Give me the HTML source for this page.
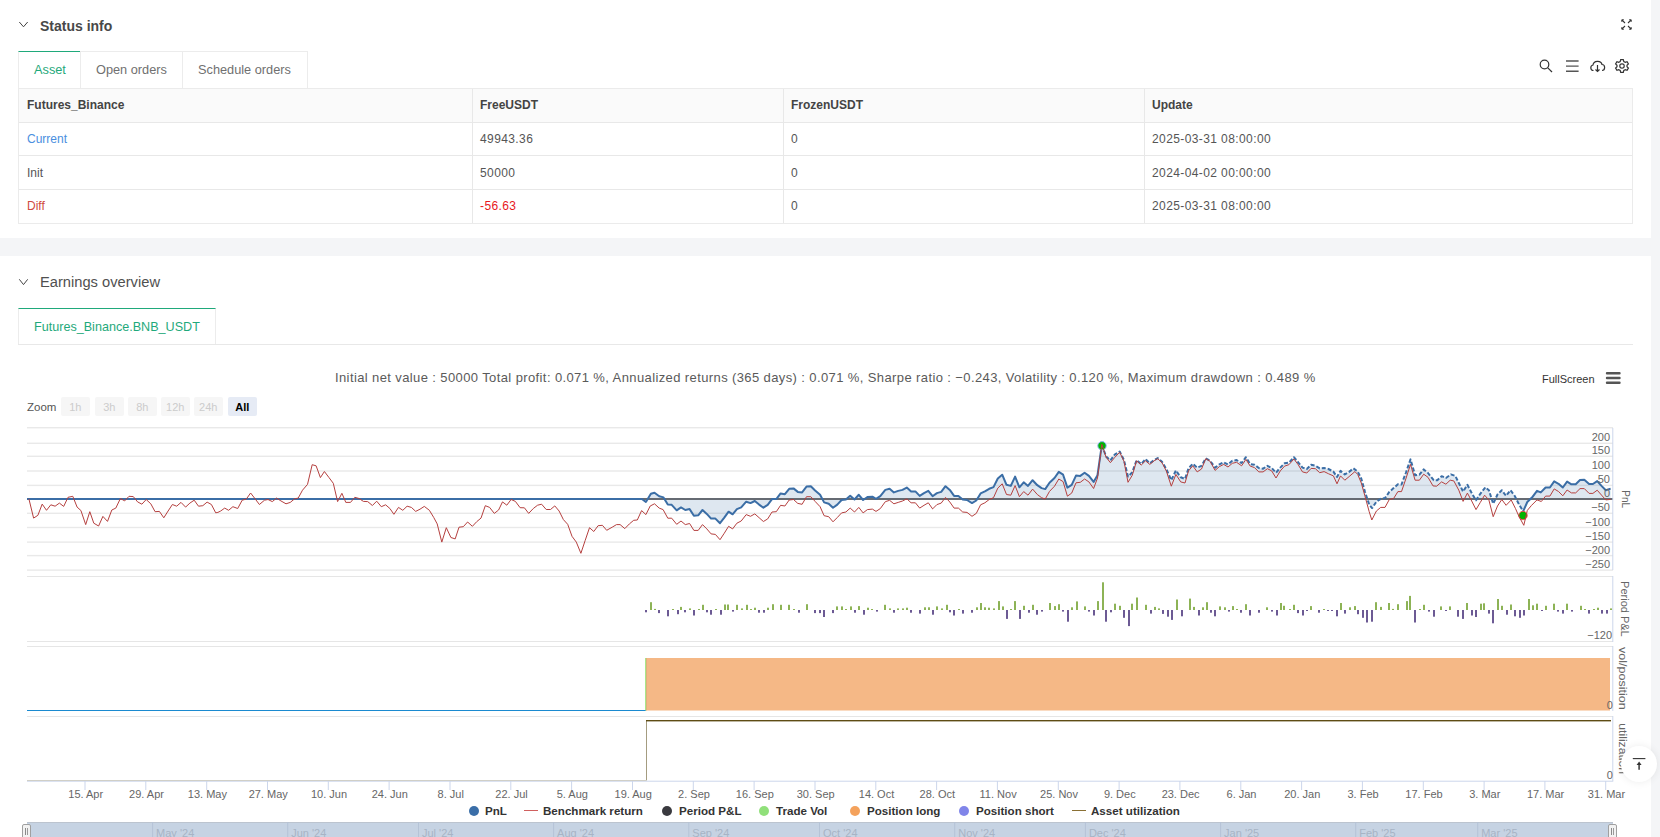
<!DOCTYPE html>
<html><head><meta charset="utf-8">
<style>
*{box-sizing:border-box;margin:0;padding:0}
html,body{width:1660px;height:837px;overflow:hidden;background:#f4f5f7;font-family:"Liberation Sans",sans-serif;color:#333}
.abs{position:absolute}
.panel{position:absolute;left:0;width:1651px;background:#fff}
.t{position:absolute;white-space:nowrap;line-height:1}
svg text{font-family:"Liberation Sans",sans-serif}
.tbl{position:absolute;left:18px;top:88px;width:1615px;height:136px;border:1px solid #ebebeb}
.row{position:absolute;left:0;width:1613px;border-bottom:1px solid #e8e8e8}
.col{position:absolute;top:0;bottom:0;width:1px;background:#e8e8e8}
.cell{position:absolute;font-size:12px;color:#555;white-space:nowrap;line-height:1}
.hd{font-weight:bold;color:#444}
.tab{position:absolute;border:1px solid #ececec;border-bottom:none;font-size:12.75px;color:#666;line-height:1}
.zb{position:absolute;top:397px;width:28.5px;height:19px;background:#f6f6f6;border-radius:2px;font-size:11px;color:#ccc;text-align:center;line-height:20px}
.lg{position:absolute;top:804.5px;font-size:11.6px;font-weight:bold;color:#333;white-space:nowrap;line-height:1}
.dot{position:absolute;top:805.5px;width:10px;height:10px;border-radius:50%}
</style></head><body>
<!-- Panel 1 -->
<div class="panel" style="top:0;height:238px">
  <svg class="abs" style="left:18px;top:20px" width="11" height="9" viewBox="0 0 11 9"><path d="M1.3 2 L5.5 6.8 L9.7 2" fill="none" stroke="#444" stroke-width="1"/></svg>
  <div class="t" style="left:40px;top:19px;font-size:14px;font-weight:bold;color:#484848">Status info</div>
  <svg class="abs" style="left:1620px;top:18px" width="13" height="13" viewBox="0 0 13 13">
    <g stroke="#333" stroke-width="1.1" fill="none"><path d="M1.8 1.8 L5 5 M1.8 1.8 L1.8 3.8 M1.8 1.8 L3.8 1.8"/><path d="M11.2 1.8 L8 5 M11.2 1.8 L9.2 1.8 M11.2 1.8 L11.2 3.8"/><path d="M1.8 11.2 L5 8 M1.8 11.2 L1.8 9.2 M1.8 11.2 L3.8 11.2"/><path d="M11.2 11.2 L8 8 M11.2 11.2 L11.2 9.2 M11.2 11.2 L9.2 11.2"/></g>
  </svg>
  <!-- tabs -->
  <div class="tab" style="left:18px;top:51px;width:63px;height:37px;border-top:1px solid #1fa97b;color:#1fa97b"><span class="t" style="left:15px;top:12px">Asset</span></div>
  <div class="tab" style="left:80px;top:51px;width:103px;height:37px;color:#707070"><span class="t" style="left:15px;top:12px">Open orders</span></div>
  <div class="tab" style="left:182px;top:51px;width:126px;height:37px;color:#707070"><span class="t" style="left:15px;top:12px">Schedule orders</span></div>
  <!-- toolbar icons -->
  <svg class="abs" style="left:1536px;top:56px" width="100" height="20" viewBox="0 0 100 20">
    <g fill="none" stroke="#333" stroke-width="1.2">
      <circle cx="8.5" cy="8.5" r="4.3"/><path d="M11.8 11.8 L16 16"/>
      <path d="M30 5 L42.6 5 M30 10.1 L42.6 10.1 M30 15.2 L42.6 15.2" stroke-width="1.4" stroke="#555"/>
      <path d="M57.5 14.5 C54 14.5 54 9.5 57 9 C57.5 4.5 65 4 66 8.5 C69.5 8.5 69.5 14.5 66 14.5"/><path d="M61.5 9 L61.5 15.5 M59.5 13.5 L61.5 15.5 L63.5 13.5"/>
    </g>
    <g transform="translate(86 10)" fill="none" stroke="#333" stroke-width="1.2">
      <path d="M-1.3 -6.3 L1.3 -6.3 L1.8 -4.4 L3.3 -3.6 L5.1 -4.3 L6.4 -2.1 L5 -0.8 L5 0.8 L6.4 2.1 L5.1 4.3 L3.3 3.6 L1.8 4.4 L1.3 6.3 L-1.3 6.3 L-1.8 4.4 L-3.3 3.6 L-5.1 4.3 L-6.4 2.1 L-5 0.8 L-5 -0.8 L-6.4 -2.1 L-5.1 -4.3 L-3.3 -3.6 L-1.8 -4.4 Z"/>
      <circle cx="0" cy="0" r="2.2"/>
    </g>
  </svg>
  <!-- table -->
  <div class="tbl">
    <div class="row" style="top:0;height:34px;background:#fafafa"></div>
    <div class="row" style="top:34px;height:33px"></div>
    <div class="row" style="top:67px;height:34px"></div>
    <div class="col" style="left:453px"></div>
    <div class="col" style="left:764px"></div>
    <div class="col" style="left:1125px"></div>
    <div class="cell hd" style="left:8px;top:10px">Futures_Binance</div>
    <div class="cell hd" style="left:461px;top:10px">FreeUSDT</div>
    <div class="cell hd" style="left:772px;top:10px">FrozenUSDT</div>
    <div class="cell hd" style="left:1133px;top:10px">Update</div>
    <div class="cell" style="left:8px;top:43.5px;color:#4a8fe0">Current</div>
    <div class="cell" style="left:461px;top:43.5px;letter-spacing:0.4px">49943.36</div>
    <div class="cell" style="left:772px;top:43.5px;letter-spacing:0.4px">0</div>
    <div class="cell" style="left:1133px;top:43.5px;letter-spacing:0.4px">2025-03-31 08:00:00</div>
    <div class="cell" style="left:8px;top:77.5px">Init</div>
    <div class="cell" style="left:461px;top:77.5px;letter-spacing:0.4px">50000</div>
    <div class="cell" style="left:772px;top:77.5px;letter-spacing:0.4px">0</div>
    <div class="cell" style="left:1133px;top:77.5px;letter-spacing:0.4px">2024-04-02 00:00:00</div>
    <div class="cell" style="left:8px;top:110.5px;color:#d04a40">Diff</div>
    <div class="cell" style="left:461px;top:110.5px;color:#e8171d;letter-spacing:0.4px">-56.63</div>
    <div class="cell" style="left:772px;top:110.5px;letter-spacing:0.4px">0</div>
    <div class="cell" style="left:1133px;top:110.5px;letter-spacing:0.4px">2025-03-31 08:00:00</div>
  </div>
</div>
<!-- Panel 2 -->
<div class="panel" style="top:256px;height:581px">
  <svg class="abs" style="left:18px;top:21px" width="11" height="9" viewBox="0 0 11 9"><path d="M1.3 2.3 L5.5 7.6 L9.7 2.3" fill="none" stroke="#444" stroke-width="1"/></svg>
  <div class="t" style="left:40px;top:19px;font-size:14.7px;color:#505050">Earnings overview</div>
  <div class="abs" style="left:18px;top:88px;width:1615px;height:1px;background:#e8e8e8"></div>
  <div class="tab" style="left:18px;top:52px;width:198px;height:36px;border-top:1px solid #1fa97b;color:#1fa97b;font-size:12.6px"><span class="t" style="left:15px;top:11.5px">Futures_Binance.BNB_USDT</span></div>
</div>
<div class="t" style="left:335px;top:370.6px;font-size:13px;letter-spacing:0.39px;color:#5a5a5a">Initial net value : 50000 Total profit: 0.071 %, Annualized returns (365 days) : 0.071 %, Sharpe ratio : −0.243, Volatility : 0.120 %, Maximum drawdown : 0.489 %</div>
<div class="t" style="left:1542px;top:373.5px;font-size:11px;color:#333">FullScreen</div>
<svg class="abs" style="left:1605px;top:371px" width="16" height="14" viewBox="0 0 16 14"><g stroke="#555" stroke-width="2.4" stroke-linecap="round"><path d="M2 2.3 L14.5 2.3 M2 7 L14.5 7 M2 11.7 L14.5 11.7"/></g></svg>
<div class="t" style="left:27px;top:401.8px;font-size:11.5px;color:#555">Zoom</div>
<div class="zb" style="left:61px">1h</div>
<div class="zb" style="left:95px">3h</div>
<div class="zb" style="left:128px">8h</div>
<div class="zb" style="left:161px">12h</div>
<div class="zb" style="left:194px">24h</div>
<div class="zb" style="left:228px;background:#e6ebf5;color:#000;font-weight:bold">All</div>
<svg width="1660" height="837" viewBox="0 0 1660 837" style="position:absolute;left:0;top:0">
<rect x="27" y="427.0" width="1586" height="1.4" fill="#e9e9e9"/>
<rect x="27" y="442.6" width="1586" height="1.4" fill="#e9e9e9"/>
<rect x="27" y="455.6" width="1586" height="1.4" fill="#e9e9e9"/>
<rect x="27" y="470.3" width="1586" height="1.4" fill="#e9e9e9"/>
<rect x="27" y="484.7" width="1586" height="1.4" fill="#e9e9e9"/>
<rect x="27" y="512.6" width="1586" height="1.4" fill="#e9e9e9"/>
<rect x="27" y="526.8" width="1586" height="1.4" fill="#e9e9e9"/>
<rect x="27" y="541.4" width="1586" height="1.4" fill="#e9e9e9"/>
<rect x="27" y="554.9" width="1586" height="1.4" fill="#e9e9e9"/>
<rect x="27" y="569.4" width="1586" height="1.4" fill="#e9e9e9"/>
<rect x="27" y="576" width="1586" height="1" fill="#e6e6e6"/>
<rect x="27" y="641" width="1586" height="1" fill="#e6e6e6"/>
<rect x="27" y="646" width="1586" height="1" fill="#e6e6e6"/>
<rect x="27" y="716" width="1586" height="1" fill="#e6e6e6"/>
<path d="M27.0 499.0 L641.6 499.0 L641.6 498.8 L645.9 502.0 L650.9 493.8 L654.5 492.7 L659.2 496.2 L663.5 497.4 L667.8 504.6 L671.7 504.8 L676.7 510.3 L681.0 507.4 L685.3 510.0 L689.6 509.1 L693.9 515.7 L698.2 515.3 L702.5 510.0 L706.8 513.9 L711.1 518.6 L715.4 518.6 L720.0 523.2 L724.3 517.7 L728.6 511.7 L732.6 514.3 L736.9 509.1 L741.2 507.4 L746.2 501.7 L750.5 503.1 L754.8 501.0 L759.1 504.6 L763.4 507.7 L767.7 504.8 L772.0 499.1 L776.3 499.1 L780.6 493.4 L784.9 494.2 L789.2 488.8 L793.5 488.4 L797.8 491.9 L802.1 492.4 L806.5 486.6 L810.8 486.3 L815.1 490.5 L820.1 494.8 L824.1 502.4 L828.7 503.8 L833.0 507.8 L837.3 504.6 L841.6 500.0 L845.9 499.5 L850.2 495.7 L854.5 499.5 L858.8 494.8 L863.1 500.0 L867.4 497.1 L872.4 496.7 L876.0 498.8 L880.3 496.2 L885.3 489.9 L889.6 488.8 L893.9 492.4 L898.2 490.9 L902.5 489.9 L906.8 487.6 L911.1 491.4 L915.4 491.4 L919.7 495.9 L924.0 493.1 L928.3 490.9 L932.6 496.2 L936.9 493.1 L941.2 491.9 L945.5 486.2 L949.8 489.9 L954.1 495.9 L958.4 495.9 L962.7 499.5 L967.0 500.0 L972.0 503.1 L976.3 500.5 L980.6 493.4 L984.9 491.4 L989.2 488.8 L993.5 487.1 L997.8 478.5 L1002.2 474.7 L1006.5 484.8 L1010.8 485.9 L1015.1 476.6 L1019.4 487.3 L1023.7 482.3 L1028.0 485.9 L1032.6 480.2 L1037.3 485.2 L1041.6 488.1 L1045.2 489.1 L1049.5 482.8 L1054.5 478.0 L1058.8 471.9 L1063.1 474.7 L1067.4 487.6 L1071.7 484.8 L1076.0 475.6 L1080.3 475.9 L1084.6 472.7 L1088.9 475.9 L1093.6 481.9 L1097.5 475.2 L1101.8 445.1 L1106.1 456.5 L1110.4 460.4 L1114.7 454.7 L1119.7 451.5 L1124.0 460.1 L1128.0 476.6 L1132.3 472.3 L1136.6 460.1 L1141.2 464.1 L1145.5 459.0 L1149.8 463.3 L1154.1 460.1 L1157.7 458.0 L1162.0 461.8 L1166.3 469.0 L1171.3 480.2 L1175.9 470.4 L1180.7 477.3 L1185.0 479.0 L1188.5 468.4 L1192.8 463.7 L1197.2 467.6 L1201.5 465.8 L1205.8 458.4 L1210.1 460.8 L1215.1 467.6 L1219.4 464.4 L1223.7 462.3 L1228.0 464.4 L1232.3 460.8 L1236.6 460.1 L1241.6 463.0 L1245.9 457.2 L1250.2 464.1 L1254.5 464.7 L1258.8 468.0 L1263.1 468.7 L1267.4 465.8 L1271.7 468.0 L1276.0 472.7 L1280.3 467.6 L1284.6 463.3 L1288.9 462.7 L1293.9 457.2 L1298.2 462.3 L1302.5 467.6 L1306.8 469.0 L1311.1 464.7 L1315.4 465.8 L1319.7 468.4 L1324.1 468.0 L1328.4 469.0 L1333.4 471.6 L1337.0 477.0 L1340.5 470.9 L1344.8 474.4 L1349.1 471.9 L1353.4 468.4 L1357.7 471.6 L1361.3 478.7 L1364.9 491.6 L1369.2 504.6 L1372.1 508.1 L1376.4 501.7 L1380.7 498.8 L1385.0 498.1 L1389.3 491.9 L1393.6 488.1 L1397.9 484.2 L1401.5 484.5 L1405.8 473.0 L1410.5 459.4 L1415.1 475.2 L1419.4 474.7 L1423.7 469.4 L1428.0 473.0 L1433.7 480.2 L1437.3 480.2 L1441.6 476.2 L1445.9 478.0 L1450.9 474.4 L1455.3 475.9 L1458.8 483.0 L1463.1 491.6 L1467.4 484.8 L1471.7 493.1 L1476.0 500.3 L1480.3 493.8 L1485.4 487.3 L1488.9 490.2 L1493.2 503.8 L1497.5 494.5 L1501.8 490.2 L1506.1 495.9 L1510.4 490.2 L1514.7 495.9 L1519.1 504.6 L1523.4 511.7 L1527.3 502.0 L1532.7 496.7 L1537.0 490.8 L1540.8 492.4 L1545.6 487.5 L1549.9 487.5 L1554.2 481.4 L1558.5 483.8 L1562.8 487.5 L1567.1 481.6 L1571.4 484.3 L1575.7 484.3 L1580.0 480.0 L1584.3 479.7 L1589.1 484.0 L1592.9 484.0 L1597.2 481.1 L1601.5 485.9 L1605.8 490.2 L1610.6 488.6 L1610.6 499.0 Z" fill="#3b6ea6" fill-opacity="0.17"/>
<rect x="27" y="498" width="1586" height="2" fill="#666b73"/>
<path d="M27 499 L641.6 499" stroke="#3b6ea6" stroke-width="2" fill="none"/>
<path d="M641.6 498.8 L645.9 502.0 L650.9 493.8 L654.5 492.7 L659.2 496.2 L663.5 497.4 L667.8 504.6 L671.7 504.8 L676.7 510.3 L681.0 507.4 L685.3 510.0 L689.6 509.1 L693.9 515.7 L698.2 515.3 L702.5 510.0 L706.8 513.9 L711.1 518.6 L715.4 518.6 L720.0 523.2 L724.3 517.7 L728.6 511.7 L732.6 514.3 L736.9 509.1 L741.2 507.4 L746.2 501.7 L750.5 503.1 L754.8 501.0 L759.1 504.6 L763.4 507.7 L767.7 504.8 L772.0 499.1 L776.3 499.1 L780.6 493.4 L784.9 494.2 L789.2 488.8 L793.5 488.4 L797.8 491.9 L802.1 492.4 L806.5 486.6 L810.8 486.3 L815.1 490.5 L820.1 494.8 L824.1 502.4 L828.7 503.8 L833.0 507.8 L837.3 504.6 L841.6 500.0 L845.9 499.5 L850.2 495.7 L854.5 499.5 L858.8 494.8 L863.1 500.0 L867.4 497.1 L872.4 496.7 L876.0 498.8 L880.3 496.2 L885.3 489.9 L889.6 488.8 L893.9 492.4 L898.2 490.9 L902.5 489.9 L906.8 487.6 L911.1 491.4 L915.4 491.4 L919.7 495.9 L924.0 493.1 L928.3 490.9 L932.6 496.2 L936.9 493.1 L941.2 491.9 L945.5 486.2 L949.8 489.9 L954.1 495.9 L958.4 495.9 L962.7 499.5 L967.0 500.0 L972.0 503.1 L976.3 500.5 L980.6 493.4 L984.9 491.4 L989.2 488.8 L993.5 487.1 L997.8 478.5 L1002.2 474.7 L1006.5 484.8 L1010.8 485.9 L1015.1 476.6 L1019.4 487.3 L1023.7 482.3 L1028.0 485.9 L1032.6 480.2 L1037.3 485.2 L1041.6 488.1 L1045.2 489.1 L1049.5 482.8 L1054.5 478.0 L1058.8 471.9 L1063.1 474.7 L1067.4 487.6 L1071.7 484.8 L1076.0 475.6 L1080.3 475.9 L1084.6 472.7 L1088.9 475.9 L1093.6 481.9 L1097.5 475.2 L1101.8 445.1" fill="none" stroke="#3b6ea6" stroke-width="2" stroke-linejoin="round"/>
<path d="M1101.8 445.1 L1106.1 456.5 L1110.4 460.4 L1114.7 454.7 L1119.7 451.5 L1124.0 460.1 L1128.0 476.6 L1132.3 472.3 L1136.6 460.1 L1141.2 464.1 L1145.5 459.0 L1149.8 463.3 L1154.1 460.1 L1157.7 458.0 L1162.0 461.8 L1166.3 469.0 L1171.3 480.2 L1175.9 470.4 L1180.7 477.3 L1185.0 479.0 L1188.5 468.4 L1192.8 463.7 L1197.2 467.6 L1201.5 465.8 L1205.8 458.4 L1210.1 460.8 L1215.1 467.6 L1219.4 464.4 L1223.7 462.3 L1228.0 464.4 L1232.3 460.8 L1236.6 460.1 L1241.6 463.0 L1245.9 457.2 L1250.2 464.1 L1254.5 464.7 L1258.8 468.0 L1263.1 468.7 L1267.4 465.8 L1271.7 468.0 L1276.0 472.7 L1280.3 467.6 L1284.6 463.3 L1288.9 462.7 L1293.9 457.2 L1298.2 462.3 L1302.5 467.6 L1306.8 469.0 L1311.1 464.7 L1315.4 465.8 L1319.7 468.4 L1324.1 468.0 L1328.4 469.0 L1333.4 471.6 L1337.0 477.0 L1340.5 470.9 L1344.8 474.4 L1349.1 471.9 L1353.4 468.4 L1357.7 471.6 L1361.3 478.7 L1364.9 491.6 L1369.2 504.6 L1372.1 508.1 L1376.4 501.7 L1380.7 498.8 L1385.0 498.1 L1389.3 491.9 L1393.6 488.1 L1397.9 484.2 L1401.5 484.5 L1405.8 473.0 L1410.5 459.4 L1415.1 475.2 L1419.4 474.7 L1423.7 469.4 L1428.0 473.0 L1433.7 480.2 L1437.3 480.2 L1441.6 476.2 L1445.9 478.0 L1450.9 474.4 L1455.3 475.9 L1458.8 483.0 L1463.1 491.6 L1467.4 484.8 L1471.7 493.1 L1476.0 500.3 L1480.3 493.8 L1485.4 487.3 L1488.9 490.2 L1493.2 503.8 L1497.5 494.5 L1501.8 490.2 L1506.1 495.9 L1510.4 490.2 L1514.7 495.9 L1519.1 504.6 L1523.4 511.7" fill="none" stroke="#3b6ea6" stroke-width="2" stroke-dasharray="4 2" stroke-linejoin="round"/>
<path d="M1523.0 511.7 L1527.3 502.0 L1532.7 496.7 L1537.0 490.8 L1540.8 492.4 L1545.6 487.5 L1549.9 487.5 L1554.2 481.4 L1558.5 483.8 L1562.8 487.5 L1567.1 481.6 L1571.4 484.3 L1575.7 484.3 L1580.0 480.0 L1584.3 479.7 L1589.1 484.0 L1592.9 484.0 L1597.2 481.1 L1601.5 485.9 L1605.8 490.2 L1610.6 488.6" fill="none" stroke="#3b6ea6" stroke-width="2" stroke-linejoin="round"/>
<circle cx="1102" cy="445.8" r="4.2" fill="#00b400" stroke="#8fb6f0" stroke-width="1"/>
<circle cx="1523" cy="515.5" r="4.2" fill="#00b400" stroke="#f05050" stroke-width="1"/>
<path d="M28.9 498.8 L33.6 518.1 L37.9 515.3 L42.2 504.1 L46.5 510.3 L50.8 504.8 L55.1 506.2 L59.4 503.1 L63.7 506.4 L68.0 497.3 L72.8 496.3 L77.1 507.1 L80.9 510.5 L85.7 524.6 L89.8 511.7 L93.8 523.2 L98.6 526.0 L102.9 516.4 L107.5 521.4 L111.8 510.0 L115.8 508.1 L120.4 498.5 L124.7 500.9 L129.0 496.3 L133.3 496.6 L137.6 501.9 L141.9 504.2 L146.2 499.5 L150.8 503.8 L155.1 511.7 L159.4 511.4 L163.8 517.8 L168.1 511.0 L172.4 504.5 L176.7 506.2 L181.0 502.4 L185.6 507.1 L189.9 503.1 L194.2 500.2 L198.5 506.2 L202.8 505.7 L207.1 502.1 L211.4 504.5 L215.7 512.8 L217.9 512.4 L220.7 511.0 L224.7 508.1 L228.6 510.3 L232.9 506.7 L237.7 508.5 L242.2 500.2 L246.3 499.1 L250.6 493.0 L255.1 498.8 L259.4 504.5 L264.5 500.2 L268.0 499.5 L272.3 501.6 L276.6 498.1 L280.9 500.9 L286.0 503.8 L290.3 502.4 L294.6 498.8 L298.2 498.1 L302.5 490.2 L307.5 484.4 L312.2 464.7 L316.1 465.8 L320.4 477.6 L324.4 471.5 L329.0 477.6 L333.3 483.3 L337.6 501.6 L341.9 493.3 L345.8 502.4 L350.5 502.4 L354.8 497.3 L359.1 498.5 L363.4 501.4 L367.7 501.6 L372.4 505.5 L376.7 501.2 L381.3 506.7 L385.6 504.8 L389.9 508.5 L393.9 514.3 L398.5 507.4 L402.8 510.3 L407.1 506.2 L411.4 507.4 L415.7 511.4 L420.0 509.2 L424.3 506.4 L429.4 510.3 L433.7 517.4 L437.2 523.9 L441.8 542.1 L446.3 527.7 L450.9 537.5 L455.2 538.9 L459.0 527.2 L463.3 526.7 L467.6 522.0 L472.4 526.3 L476.7 521.7 L481.0 518.1 L485.3 505.7 L489.6 507.4 L494.3 513.4 L498.6 510.0 L502.5 501.9 L506.8 505.2 L511.1 499.5 L515.4 501.4 L520.1 507.7 L524.4 507.8 L528.7 513.4 L533.3 508.5 L537.6 505.2 L541.6 504.2 L546.2 509.5 L550.5 509.5 L554.8 505.9 L559.1 511.0 L563.4 519.6 L567.7 524.3 L572.0 536.3 L576.3 542.1 L580.9 553.3 L585.2 540.4 L589.5 527.7 L593.8 531.5 L598.1 525.7 L602.4 525.3 L606.7 530.3 L612.2 527.2 L616.5 524.6 L620.1 524.6 L624.8 528.6 L629.4 523.9 L633.7 520.3 L637.3 520.0 L641.6 510.6 L645.9 514.6 L650.2 506.0 L654.5 503.8 L659.2 508.1 L663.1 509.6 L667.8 518.2 L671.7 518.2 L676.7 524.3 L681.0 521.0 L685.3 524.6 L689.6 523.5 L693.9 530.4 L698.2 530.4 L702.5 524.6 L706.8 528.9 L711.1 533.9 L715.4 534.4 L720.0 539.7 L724.3 533.2 L728.6 526.3 L732.6 528.9 L736.9 523.2 L741.2 521.0 L746.2 514.6 L750.5 516.3 L754.8 513.9 L759.1 517.7 L763.4 521.5 L767.7 518.9 L772.0 512.0 L776.3 511.7 L780.6 505.3 L784.9 506.0 L789.2 500.0 L793.5 499.5 L797.8 503.4 L802.1 504.3 L806.5 496.7 L810.8 496.7 L815.1 501.4 L820.1 506.7 L824.1 515.7 L828.7 516.7 L833.0 521.8 L837.3 517.5 L841.6 512.9 L845.9 512.0 L850.2 508.1 L854.5 512.0 L858.8 507.4 L863.1 512.9 L867.4 509.6 L872.4 509.1 L876.0 511.4 L880.3 508.6 L885.3 501.7 L889.6 500.3 L893.9 503.8 L898.2 502.4 L902.5 501.0 L906.8 498.8 L911.1 502.8 L915.4 502.8 L919.7 508.1 L924.0 505.3 L928.3 502.8 L932.6 508.9 L936.9 504.6 L941.2 503.1 L945.5 497.4 L949.8 502.0 L954.1 508.1 L958.4 508.1 L962.7 512.0 L967.0 512.4 L972.0 516.3 L976.3 513.4 L980.6 504.8 L984.9 502.8 L989.2 499.5 L993.5 497.7 L997.8 488.1 L1002.2 483.8 L1006.5 494.5 L1010.8 495.2 L1015.1 485.6 L1019.4 496.7 L1023.7 491.6 L1028.0 495.2 L1032.6 489.1 L1037.3 494.5 L1041.6 497.7 L1045.2 499.1 L1049.5 491.4 L1054.5 486.2 L1058.8 479.0 L1063.1 481.6 L1067.4 496.2 L1071.7 493.1 L1076.0 482.8 L1080.3 482.3 L1084.6 479.0 L1088.9 481.9 L1093.6 488.5 L1097.5 478.0 L1101.8 444.3 L1106.1 457.2 L1110.4 462.7 L1114.7 457.5 L1119.7 452.2 L1124.0 461.3 L1128.0 482.3 L1132.3 475.2 L1136.6 460.8 L1141.2 465.1 L1145.5 460.8 L1149.8 464.4 L1154.1 460.8 L1157.7 458.7 L1162.0 462.7 L1166.3 470.9 L1171.3 486.2 L1175.9 474.4 L1180.7 481.9 L1185.0 483.0 L1188.5 470.9 L1192.8 465.8 L1197.2 471.9 L1201.5 469.0 L1205.8 458.7 L1210.1 461.3 L1215.1 470.4 L1219.4 466.6 L1223.7 464.4 L1228.0 467.0 L1232.3 463.3 L1236.6 462.3 L1241.6 465.8 L1245.9 459.4 L1250.2 466.1 L1254.5 467.6 L1258.8 471.9 L1263.1 471.9 L1267.4 468.7 L1271.7 470.9 L1276.0 478.0 L1280.3 470.9 L1284.6 466.1 L1288.9 464.7 L1293.9 459.0 L1298.2 464.7 L1302.5 471.9 L1306.8 473.0 L1311.1 468.4 L1315.4 468.7 L1319.7 472.7 L1324.1 471.6 L1328.4 473.7 L1333.4 475.9 L1337.0 483.8 L1340.5 475.9 L1344.8 480.2 L1349.1 476.6 L1354.9 471.6 L1357.7 474.4 L1361.3 483.0 L1364.9 495.9 L1369.2 511.7 L1371.8 520.0 L1376.4 511.0 L1380.7 507.4 L1385.0 507.4 L1389.3 499.5 L1393.6 498.5 L1397.9 491.6 L1401.5 491.6 L1405.8 479.0 L1410.5 464.4 L1415.1 480.2 L1419.4 480.2 L1423.7 474.2 L1428.0 477.3 L1433.0 485.9 L1436.6 486.2 L1441.6 481.9 L1445.9 484.2 L1450.2 480.2 L1453.8 480.9 L1458.8 490.2 L1463.1 501.4 L1467.4 493.1 L1471.7 501.0 L1476.0 509.6 L1480.3 502.4 L1484.6 495.2 L1488.9 500.0 L1493.2 516.7 L1497.5 506.0 L1501.8 499.5 L1506.1 505.3 L1511.2 500.0 L1515.5 508.6 L1519.1 516.7 L1523.8 525.3 L1527.3 510.4 L1531.6 505.3 L1537.0 499.9 L1541.3 501.5 L1545.6 496.1 L1549.9 496.1 L1554.2 488.9 L1558.5 491.5 L1562.8 495.8 L1567.1 490.0 L1571.4 492.9 L1575.7 492.9 L1580.0 488.6 L1584.3 488.6 L1589.1 493.4 L1592.9 493.4 L1597.2 490.2 L1601.5 495.1 L1605.8 499.9 L1610.6 499.4" fill="none" stroke="#b5403f" stroke-width="1" stroke-linejoin="round"/>
<rect x="645" y="610.0" width="2" height="2.3" fill="#6c5a94"/>
<rect x="650" y="602.2" width="2" height="7.8" fill="#8db356"/>
<rect x="654" y="608.9" width="2" height="1.1" fill="#8db356"/>
<rect x="658" y="610.0" width="2" height="3.1" fill="#6c5a94"/>
<rect x="667" y="610.0" width="2" height="6.3" fill="#6c5a94"/>
<rect x="672" y="609.0" width="2" height="1.0" fill="#8db356"/>
<rect x="677" y="610.0" width="2" height="4.2" fill="#6c5a94"/>
<rect x="680" y="606.9" width="2" height="3.1" fill="#8db356"/>
<rect x="684" y="610.0" width="2" height="2.3" fill="#6c5a94"/>
<rect x="689" y="608.4" width="2" height="1.6" fill="#8db356"/>
<rect x="693" y="610.0" width="2" height="5.5" fill="#6c5a94"/>
<rect x="698" y="609.0" width="2" height="1.0" fill="#8db356"/>
<rect x="702" y="604.8" width="2" height="5.2" fill="#8db356"/>
<rect x="706" y="610.0" width="2" height="2.3" fill="#6c5a94"/>
<rect x="710" y="610.0" width="2" height="4.7" fill="#6c5a94"/>
<rect x="715" y="609.0" width="2" height="1.0" fill="#8db356"/>
<rect x="720" y="610.0" width="2" height="4.7" fill="#6c5a94"/>
<rect x="724" y="604.5" width="2" height="5.5" fill="#8db356"/>
<rect x="727" y="604.5" width="2" height="5.5" fill="#8db356"/>
<rect x="732" y="610.0" width="2" height="1.6" fill="#6c5a94"/>
<rect x="736" y="604.8" width="2" height="5.2" fill="#8db356"/>
<rect x="741" y="608.4" width="2" height="1.6" fill="#8db356"/>
<rect x="746" y="604.8" width="2" height="5.2" fill="#8db356"/>
<rect x="750" y="609.0" width="2" height="1.0" fill="#8db356"/>
<rect x="754" y="607.7" width="2" height="2.3" fill="#8db356"/>
<rect x="758" y="610.0" width="2" height="2.7" fill="#6c5a94"/>
<rect x="763" y="610.0" width="2" height="2.7" fill="#6c5a94"/>
<rect x="767" y="607.7" width="2" height="2.3" fill="#8db356"/>
<rect x="772" y="604.2" width="2" height="5.8" fill="#8db356"/>
<rect x="780" y="604.8" width="2" height="5.2" fill="#8db356"/>
<rect x="788" y="604.8" width="2" height="5.2" fill="#8db356"/>
<rect x="793" y="609.0" width="2" height="1.0" fill="#8db356"/>
<rect x="798" y="610.0" width="2" height="2.7" fill="#6c5a94"/>
<rect x="806" y="604.2" width="2" height="5.8" fill="#8db356"/>
<rect x="814" y="610.0" width="2" height="3.1" fill="#6c5a94"/>
<rect x="819" y="610.0" width="2" height="3.1" fill="#6c5a94"/>
<rect x="823" y="610.0" width="2" height="7.0" fill="#6c5a94"/>
<rect x="832" y="610.0" width="2" height="3.1" fill="#6c5a94"/>
<rect x="836" y="606.4" width="2" height="3.6" fill="#8db356"/>
<rect x="841" y="606.4" width="2" height="3.6" fill="#8db356"/>
<rect x="845" y="609.0" width="2" height="1.0" fill="#8db356"/>
<rect x="850" y="606.4" width="2" height="3.6" fill="#8db356"/>
<rect x="854" y="610.0" width="2" height="2.7" fill="#6c5a94"/>
<rect x="858" y="606.1" width="2" height="3.9" fill="#8db356"/>
<rect x="863" y="610.0" width="2" height="4.7" fill="#6c5a94"/>
<rect x="867" y="607.7" width="2" height="2.3" fill="#8db356"/>
<rect x="871" y="609.0" width="2" height="1.0" fill="#8db356"/>
<rect x="876" y="610.0" width="2" height="1.6" fill="#6c5a94"/>
<rect x="884" y="604.8" width="2" height="5.2" fill="#8db356"/>
<rect x="889" y="608.4" width="2" height="1.6" fill="#8db356"/>
<rect x="893" y="610.0" width="2" height="2.7" fill="#6c5a94"/>
<rect x="897" y="608.4" width="2" height="1.6" fill="#8db356"/>
<rect x="902" y="608.4" width="2" height="1.6" fill="#8db356"/>
<rect x="906" y="607.7" width="2" height="2.3" fill="#8db356"/>
<rect x="910" y="610.0" width="2" height="2.7" fill="#6c5a94"/>
<rect x="919" y="610.0" width="2" height="3.6" fill="#6c5a94"/>
<rect x="924" y="607.3" width="2" height="2.7" fill="#8db356"/>
<rect x="928" y="607.3" width="2" height="2.7" fill="#8db356"/>
<rect x="932" y="610.0" width="2" height="4.7" fill="#6c5a94"/>
<rect x="936" y="606.4" width="2" height="3.6" fill="#8db356"/>
<rect x="941" y="608.4" width="2" height="1.6" fill="#8db356"/>
<rect x="946" y="604.8" width="2" height="5.2" fill="#8db356"/>
<rect x="949" y="610.0" width="2" height="2.3" fill="#6c5a94"/>
<rect x="953" y="610.0" width="2" height="5.5" fill="#6c5a94"/>
<rect x="958" y="609.0" width="2" height="1.0" fill="#8db356"/>
<rect x="962" y="610.0" width="2" height="3.6" fill="#6c5a94"/>
<rect x="971" y="610.0" width="2" height="2.7" fill="#6c5a94"/>
<rect x="976" y="607.3" width="2" height="2.7" fill="#8db356"/>
<rect x="980" y="603.0" width="2" height="7.0" fill="#8db356"/>
<rect x="984" y="607.3" width="2" height="2.7" fill="#8db356"/>
<rect x="988" y="607.7" width="2" height="2.3" fill="#8db356"/>
<rect x="993" y="608.4" width="2" height="1.6" fill="#8db356"/>
<rect x="998" y="601.1" width="2" height="8.9" fill="#8db356"/>
<rect x="1002" y="606.4" width="2" height="3.6" fill="#8db356"/>
<rect x="1006" y="610.0" width="2" height="8.9" fill="#6c5a94"/>
<rect x="1010" y="609.0" width="2" height="1.0" fill="#8db356"/>
<rect x="1014" y="601.1" width="2" height="8.9" fill="#8db356"/>
<rect x="1019" y="610.0" width="2" height="8.9" fill="#6c5a94"/>
<rect x="1023" y="605.8" width="2" height="4.2" fill="#8db356"/>
<rect x="1028" y="610.0" width="2" height="2.7" fill="#6c5a94"/>
<rect x="1032" y="604.8" width="2" height="5.2" fill="#8db356"/>
<rect x="1036" y="610.0" width="2" height="4.7" fill="#6c5a94"/>
<rect x="1041" y="610.0" width="2" height="1.6" fill="#6c5a94"/>
<rect x="1049" y="603.0" width="2" height="7.0" fill="#8db356"/>
<rect x="1054" y="606.1" width="2" height="3.9" fill="#8db356"/>
<rect x="1058" y="604.2" width="2" height="5.8" fill="#8db356"/>
<rect x="1062" y="610.0" width="2" height="1.6" fill="#6c5a94"/>
<rect x="1067" y="610.0" width="2" height="11.7" fill="#6c5a94"/>
<rect x="1071" y="607.3" width="2" height="2.7" fill="#8db356"/>
<rect x="1076" y="601.4" width="2" height="8.6" fill="#8db356"/>
<rect x="1084" y="606.4" width="2" height="3.6" fill="#8db356"/>
<rect x="1088" y="610.0" width="2" height="1.6" fill="#6c5a94"/>
<rect x="1093" y="610.0" width="2" height="5.5" fill="#6c5a94"/>
<rect x="1097" y="601.1" width="2" height="8.9" fill="#8db356"/>
<rect x="1102" y="582.3" width="2" height="27.7" fill="#8db356"/>
<rect x="1105" y="610.0" width="2" height="11.7" fill="#6c5a94"/>
<rect x="1110" y="610.0" width="2" height="2.3" fill="#6c5a94"/>
<rect x="1114" y="603.7" width="2" height="6.3" fill="#8db356"/>
<rect x="1119" y="605.8" width="2" height="4.2" fill="#8db356"/>
<rect x="1123" y="610.0" width="2" height="7.8" fill="#6c5a94"/>
<rect x="1128" y="610.0" width="2" height="16.1" fill="#6c5a94"/>
<rect x="1131" y="603.7" width="2" height="6.3" fill="#8db356"/>
<rect x="1136" y="597.5" width="2" height="12.5" fill="#8db356"/>
<rect x="1145" y="604.8" width="2" height="5.2" fill="#8db356"/>
<rect x="1150" y="610.0" width="2" height="3.6" fill="#6c5a94"/>
<rect x="1154" y="606.9" width="2" height="3.1" fill="#8db356"/>
<rect x="1158" y="608.4" width="2" height="1.6" fill="#8db356"/>
<rect x="1162" y="610.0" width="2" height="3.9" fill="#6c5a94"/>
<rect x="1167" y="610.0" width="2" height="6.7" fill="#6c5a94"/>
<rect x="1171" y="610.0" width="2" height="9.9" fill="#6c5a94"/>
<rect x="1176" y="599.5" width="2" height="10.5" fill="#8db356"/>
<rect x="1181" y="610.0" width="2" height="6.3" fill="#6c5a94"/>
<rect x="1189" y="598.6" width="2" height="11.4" fill="#8db356"/>
<rect x="1193" y="606.9" width="2" height="3.1" fill="#8db356"/>
<rect x="1198" y="610.0" width="2" height="5.5" fill="#6c5a94"/>
<rect x="1202" y="607.3" width="2" height="2.7" fill="#8db356"/>
<rect x="1206" y="602.2" width="2" height="7.8" fill="#8db356"/>
<rect x="1210" y="610.0" width="2" height="2.7" fill="#6c5a94"/>
<rect x="1214" y="610.0" width="2" height="6.3" fill="#6c5a94"/>
<rect x="1219" y="606.4" width="2" height="3.6" fill="#8db356"/>
<rect x="1224" y="607.3" width="2" height="2.7" fill="#8db356"/>
<rect x="1228" y="610.0" width="2" height="1.6" fill="#6c5a94"/>
<rect x="1232" y="606.1" width="2" height="3.9" fill="#8db356"/>
<rect x="1236" y="609.0" width="2" height="1.0" fill="#8db356"/>
<rect x="1240" y="610.0" width="2" height="2.7" fill="#6c5a94"/>
<rect x="1245" y="604.2" width="2" height="5.8" fill="#8db356"/>
<rect x="1249" y="610.0" width="2" height="5.5" fill="#6c5a94"/>
<rect x="1258" y="610.0" width="2" height="2.7" fill="#6c5a94"/>
<rect x="1266" y="607.3" width="2" height="2.7" fill="#8db356"/>
<rect x="1271" y="610.0" width="2" height="1.6" fill="#6c5a94"/>
<rect x="1276" y="610.0" width="2" height="5.5" fill="#6c5a94"/>
<rect x="1280" y="603.0" width="2" height="7.0" fill="#8db356"/>
<rect x="1283" y="605.8" width="2" height="4.2" fill="#8db356"/>
<rect x="1289" y="609.0" width="2" height="1.0" fill="#8db356"/>
<rect x="1293" y="604.8" width="2" height="5.2" fill="#8db356"/>
<rect x="1297" y="610.0" width="2" height="3.1" fill="#6c5a94"/>
<rect x="1302" y="610.0" width="2" height="5.5" fill="#6c5a94"/>
<rect x="1306" y="610.0" width="2" height="1.0" fill="#6c5a94"/>
<rect x="1310" y="606.1" width="2" height="3.9" fill="#8db356"/>
<rect x="1318" y="610.0" width="2" height="2.7" fill="#6c5a94"/>
<rect x="1323" y="609.0" width="2" height="1.0" fill="#8db356"/>
<rect x="1327" y="610.0" width="2" height="1.0" fill="#6c5a94"/>
<rect x="1331" y="610.0" width="2" height="1.0" fill="#6c5a94"/>
<rect x="1336" y="610.0" width="2" height="6.3" fill="#6c5a94"/>
<rect x="1340" y="603.0" width="2" height="7.0" fill="#8db356"/>
<rect x="1344" y="610.0" width="2" height="3.6" fill="#6c5a94"/>
<rect x="1349" y="607.3" width="2" height="2.7" fill="#8db356"/>
<rect x="1354" y="606.1" width="2" height="3.9" fill="#8db356"/>
<rect x="1357" y="610.0" width="2" height="4.2" fill="#6c5a94"/>
<rect x="1362" y="610.0" width="2" height="7.8" fill="#6c5a94"/>
<rect x="1366" y="610.0" width="2" height="12.5" fill="#6c5a94"/>
<rect x="1371" y="610.0" width="2" height="11.7" fill="#6c5a94"/>
<rect x="1375" y="602.2" width="2" height="7.8" fill="#8db356"/>
<rect x="1380" y="606.9" width="2" height="3.1" fill="#8db356"/>
<rect x="1388" y="603.0" width="2" height="7.0" fill="#8db356"/>
<rect x="1392" y="608.9" width="2" height="1.1" fill="#8db356"/>
<rect x="1397" y="604.2" width="2" height="5.8" fill="#8db356"/>
<rect x="1406" y="601.1" width="2" height="8.9" fill="#8db356"/>
<rect x="1409" y="595.9" width="2" height="14.1" fill="#8db356"/>
<rect x="1414" y="610.0" width="2" height="12.5" fill="#6c5a94"/>
<rect x="1419" y="609.0" width="2" height="1.0" fill="#8db356"/>
<rect x="1423" y="604.8" width="2" height="5.2" fill="#8db356"/>
<rect x="1428" y="610.0" width="2" height="1.6" fill="#6c5a94"/>
<rect x="1433" y="610.0" width="2" height="6.7" fill="#6c5a94"/>
<rect x="1440" y="606.4" width="2" height="3.6" fill="#8db356"/>
<rect x="1445" y="610.0" width="2" height="1.0" fill="#6c5a94"/>
<rect x="1449" y="606.4" width="2" height="3.6" fill="#8db356"/>
<rect x="1457" y="610.0" width="2" height="6.7" fill="#6c5a94"/>
<rect x="1462" y="610.0" width="2" height="8.9" fill="#6c5a94"/>
<rect x="1466" y="603.0" width="2" height="7.0" fill="#8db356"/>
<rect x="1471" y="610.0" width="2" height="5.5" fill="#6c5a94"/>
<rect x="1475" y="610.0" width="2" height="7.0" fill="#6c5a94"/>
<rect x="1480" y="603.7" width="2" height="6.3" fill="#8db356"/>
<rect x="1483" y="603.3" width="2" height="6.7" fill="#8db356"/>
<rect x="1488" y="610.0" width="2" height="3.6" fill="#6c5a94"/>
<rect x="1492" y="610.0" width="2" height="13.3" fill="#6c5a94"/>
<rect x="1497" y="599.0" width="2" height="11.0" fill="#8db356"/>
<rect x="1501" y="605.8" width="2" height="4.2" fill="#8db356"/>
<rect x="1506" y="610.0" width="2" height="4.7" fill="#6c5a94"/>
<rect x="1510" y="604.5" width="2" height="5.5" fill="#8db356"/>
<rect x="1514" y="610.0" width="2" height="6.3" fill="#6c5a94"/>
<rect x="1519" y="610.0" width="2" height="7.8" fill="#6c5a94"/>
<rect x="1523" y="610.0" width="2" height="5.5" fill="#6c5a94"/>
<rect x="1528" y="599.0" width="2" height="11.0" fill="#8db356"/>
<rect x="1532" y="605.3" width="2" height="4.7" fill="#8db356"/>
<rect x="1536" y="603.7" width="2" height="6.3" fill="#8db356"/>
<rect x="1541" y="610.0" width="2" height="1.0" fill="#6c5a94"/>
<rect x="1545" y="605.8" width="2" height="4.2" fill="#8db356"/>
<rect x="1553" y="603.7" width="2" height="6.3" fill="#8db356"/>
<rect x="1557" y="610.0" width="2" height="1.6" fill="#6c5a94"/>
<rect x="1562" y="610.0" width="2" height="3.6" fill="#6c5a94"/>
<rect x="1566" y="603.7" width="2" height="6.3" fill="#8db356"/>
<rect x="1571" y="610.0" width="2" height="1.6" fill="#6c5a94"/>
<rect x="1580" y="605.8" width="2" height="4.2" fill="#8db356"/>
<rect x="1584" y="609.0" width="2" height="1.0" fill="#8db356"/>
<rect x="1588" y="610.0" width="2" height="3.6" fill="#6c5a94"/>
<rect x="1593" y="609.0" width="2" height="1.0" fill="#8db356"/>
<rect x="1597" y="607.7" width="2" height="2.3" fill="#8db356"/>
<rect x="1601" y="610.0" width="2" height="3.6" fill="#6c5a94"/>
<rect x="1606" y="610.0" width="2" height="3.6" fill="#6c5a94"/>
<rect x="1610" y="608.4" width="2" height="1.6" fill="#8db356"/>
<rect x="27" y="710" width="619" height="1" fill="#1a8ad0"/>
<rect x="646" y="658" width="964" height="52.5" fill="#f5b886"/>
<rect x="645" y="658" width="1" height="52.5" fill="#a8e88a"/>
<rect x="646" y="658" width="1" height="52.5" fill="#dcb27c"/>
<rect x="27" y="780" width="619" height="1" fill="#d2ccb8"/>
<rect x="646" y="720.5" width="1" height="60" fill="#a49c80"/>
<rect x="646" y="720" width="965" height="1.4" fill="#5e4c14"/>
<rect x="1612.3" y="428" width="1" height="142" fill="#ccd6eb"/>
<rect x="1612.3" y="576" width="1" height="66" fill="#ccd6eb"/>
<rect x="1612.3" y="646" width="1" height="65" fill="#ccd6eb"/>
<rect x="1612.3" y="716" width="1" height="65" fill="#ccd6eb"/>
<rect x="27" y="780.7" width="1586.3" height="1" fill="#ccd6eb"/>
<rect x="84.5" y="781" width="1" height="9" fill="#ccd6eb"/>
<text x="85.7" y="797.7" text-anchor="middle" font-size="11" fill="#666">15. Apr</text>
<rect x="145.3" y="781" width="1" height="9" fill="#ccd6eb"/>
<text x="146.5" y="797.7" text-anchor="middle" font-size="11" fill="#666">29. Apr</text>
<rect x="206.2" y="781" width="1" height="9" fill="#ccd6eb"/>
<text x="207.4" y="797.7" text-anchor="middle" font-size="11" fill="#666">13. May</text>
<rect x="267.0" y="781" width="1" height="9" fill="#ccd6eb"/>
<text x="268.2" y="797.7" text-anchor="middle" font-size="11" fill="#666">27. May</text>
<rect x="327.8" y="781" width="1" height="9" fill="#ccd6eb"/>
<text x="329.0" y="797.7" text-anchor="middle" font-size="11" fill="#666">10. Jun</text>
<rect x="388.6" y="781" width="1" height="9" fill="#ccd6eb"/>
<text x="389.8" y="797.7" text-anchor="middle" font-size="11" fill="#666">24. Jun</text>
<rect x="449.5" y="781" width="1" height="9" fill="#ccd6eb"/>
<text x="450.7" y="797.7" text-anchor="middle" font-size="11" fill="#666">8. Jul</text>
<rect x="510.3" y="781" width="1" height="9" fill="#ccd6eb"/>
<text x="511.5" y="797.7" text-anchor="middle" font-size="11" fill="#666">22. Jul</text>
<rect x="571.1" y="781" width="1" height="9" fill="#ccd6eb"/>
<text x="572.3" y="797.7" text-anchor="middle" font-size="11" fill="#666">5. Aug</text>
<rect x="632.0" y="781" width="1" height="9" fill="#ccd6eb"/>
<text x="633.2" y="797.7" text-anchor="middle" font-size="11" fill="#666">19. Aug</text>
<rect x="692.8" y="781" width="1" height="9" fill="#ccd6eb"/>
<text x="694.0" y="797.7" text-anchor="middle" font-size="11" fill="#666">2. Sep</text>
<rect x="753.6" y="781" width="1" height="9" fill="#ccd6eb"/>
<text x="754.8" y="797.7" text-anchor="middle" font-size="11" fill="#666">16. Sep</text>
<rect x="814.5" y="781" width="1" height="9" fill="#ccd6eb"/>
<text x="815.7" y="797.7" text-anchor="middle" font-size="11" fill="#666">30. Sep</text>
<rect x="875.3" y="781" width="1" height="9" fill="#ccd6eb"/>
<text x="876.5" y="797.7" text-anchor="middle" font-size="11" fill="#666">14. Oct</text>
<rect x="936.1" y="781" width="1" height="9" fill="#ccd6eb"/>
<text x="937.3" y="797.7" text-anchor="middle" font-size="11" fill="#666">28. Oct</text>
<rect x="996.9" y="781" width="1" height="9" fill="#ccd6eb"/>
<text x="998.1" y="797.7" text-anchor="middle" font-size="11" fill="#666">11. Nov</text>
<rect x="1057.8" y="781" width="1" height="9" fill="#ccd6eb"/>
<text x="1059.0" y="797.7" text-anchor="middle" font-size="11" fill="#666">25. Nov</text>
<rect x="1118.6" y="781" width="1" height="9" fill="#ccd6eb"/>
<text x="1119.8" y="797.7" text-anchor="middle" font-size="11" fill="#666">9. Dec</text>
<rect x="1179.4" y="781" width="1" height="9" fill="#ccd6eb"/>
<text x="1180.6" y="797.7" text-anchor="middle" font-size="11" fill="#666">23. Dec</text>
<rect x="1240.3" y="781" width="1" height="9" fill="#ccd6eb"/>
<text x="1241.5" y="797.7" text-anchor="middle" font-size="11" fill="#666">6. Jan</text>
<rect x="1301.1" y="781" width="1" height="9" fill="#ccd6eb"/>
<text x="1302.3" y="797.7" text-anchor="middle" font-size="11" fill="#666">20. Jan</text>
<rect x="1361.9" y="781" width="1" height="9" fill="#ccd6eb"/>
<text x="1363.1" y="797.7" text-anchor="middle" font-size="11" fill="#666">3. Feb</text>
<rect x="1422.8" y="781" width="1" height="9" fill="#ccd6eb"/>
<text x="1424.0" y="797.7" text-anchor="middle" font-size="11" fill="#666">17. Feb</text>
<rect x="1483.6" y="781" width="1" height="9" fill="#ccd6eb"/>
<text x="1484.8" y="797.7" text-anchor="middle" font-size="11" fill="#666">3. Mar</text>
<rect x="1544.4" y="781" width="1" height="9" fill="#ccd6eb"/>
<text x="1545.6" y="797.7" text-anchor="middle" font-size="11" fill="#666">17. Mar</text>
<rect x="1605.2" y="781" width="1" height="9" fill="#ccd6eb"/>
<text x="1606.5" y="797.7" text-anchor="middle" font-size="11" fill="#666">31. Mar</text>
<text x="1610" y="441.3" text-anchor="end" font-size="11" fill="#666">200</text>
<text x="1610" y="454.3" text-anchor="end" font-size="11" fill="#666">150</text>
<text x="1610" y="469.0" text-anchor="end" font-size="11" fill="#666">100</text>
<text x="1610" y="483.4" text-anchor="end" font-size="11" fill="#666">50</text>
<text x="1610" y="497.0" text-anchor="end" font-size="11" fill="#666">0</text>
<text x="1610" y="511.3" text-anchor="end" font-size="11" fill="#666">−50</text>
<text x="1610" y="525.5" text-anchor="end" font-size="11" fill="#666">−100</text>
<text x="1610" y="540.1" text-anchor="end" font-size="11" fill="#666">−150</text>
<text x="1610" y="553.6" text-anchor="end" font-size="11" fill="#666">−200</text>
<text x="1610" y="568.1" text-anchor="end" font-size="11" fill="#666">−250</text>
<text x="1612" y="639" text-anchor="end" font-size="11" fill="#666">−120</text>
<text x="1612.8" y="709" text-anchor="end" font-size="11" fill="#666">0</text>
<text x="1612.8" y="779" text-anchor="end" font-size="11" fill="#666">0</text>
<text transform="translate(1622 499.1) rotate(90)" text-anchor="middle" font-size="11" fill="#666" textLength="17.7" lengthAdjust="spacingAndGlyphs">PnL</text>
<text transform="translate(1621.4 608.9) rotate(90)" text-anchor="middle" font-size="11" fill="#666" textLength="55.6" lengthAdjust="spacingAndGlyphs">Period P&amp;L</text>
<text transform="translate(1619.3 678.4) rotate(90)" text-anchor="middle" font-size="11" fill="#666" textLength="62.8" lengthAdjust="spacingAndGlyphs">vol/position</text>
<text transform="translate(1619.2 748.7) rotate(90)" text-anchor="middle" font-size="11" fill="#666" textLength="50.8" lengthAdjust="spacingAndGlyphs">utilization</text>
<rect x="27" y="822.5" width="1586" height="15" fill="#c6d3e3"/>
<rect x="27" y="822" width="1586" height="1" fill="#bcc4cf"/>
<rect x="152.1" y="822" width="1" height="15" fill="#b5c3d6"/>
<text x="156.1" y="837" font-size="11" fill="#a7b4c5">May '24</text>
<rect x="287.2" y="822" width="1" height="15" fill="#b5c3d6"/>
<text x="291.2" y="837" font-size="11" fill="#a7b4c5">Jun '24</text>
<rect x="418.0" y="822" width="1" height="15" fill="#b5c3d6"/>
<text x="422.0" y="837" font-size="11" fill="#a7b4c5">Jul '24</text>
<rect x="553.1" y="822" width="1" height="15" fill="#b5c3d6"/>
<text x="557.1" y="837" font-size="11" fill="#a7b4c5">Aug '24</text>
<rect x="688.3" y="822" width="1" height="15" fill="#b5c3d6"/>
<text x="692.3" y="837" font-size="11" fill="#a7b4c5">Sep '24</text>
<rect x="819.0" y="822" width="1" height="15" fill="#b5c3d6"/>
<text x="823.0" y="837" font-size="11" fill="#a7b4c5">Oct '24</text>
<rect x="954.2" y="822" width="1" height="15" fill="#b5c3d6"/>
<text x="958.2" y="837" font-size="11" fill="#a7b4c5">Nov '24</text>
<rect x="1084.9" y="822" width="1" height="15" fill="#b5c3d6"/>
<text x="1088.9" y="837" font-size="11" fill="#a7b4c5">Dec '24</text>
<rect x="1220.1" y="822" width="1" height="15" fill="#b5c3d6"/>
<text x="1224.1" y="837" font-size="11" fill="#a7b4c5">Jan '25</text>
<rect x="1355.2" y="822" width="1" height="15" fill="#b5c3d6"/>
<text x="1359.2" y="837" font-size="11" fill="#a7b4c5">Feb '25</text>
<rect x="1477.2" y="822" width="1" height="15" fill="#b5c3d6"/>
<text x="1481.2" y="837" font-size="11" fill="#a7b4c5">Mar '25</text>
<rect x="22.5" y="824.5" width="8" height="14" rx="1.5" fill="#f2f2f2" stroke="#a0a0a0" stroke-width="1"/>
<rect x="25" y="828" width="1" height="7" fill="#8a8a8a"/>
<rect x="27" y="828" width="1" height="7" fill="#9a9a9a"/>
<rect x="1608.5" y="824.5" width="8" height="14" rx="1.5" fill="#f2f2f2" stroke="#a0a0a0" stroke-width="1"/>
<rect x="1611" y="828" width="1" height="7" fill="#8a8a8a"/>
<rect x="1613" y="828" width="1" height="7" fill="#9a9a9a"/>
</svg>
<!-- legend -->
<div class="dot" style="left:469px;background:#3a6ea8"></div><div class="lg" style="left:485px">PnL</div>
<div class="abs" style="left:524px;top:810px;width:14px;height:1px;background:#d0605f"></div><div class="lg" style="left:543px">Benchmark return</div>
<div class="dot" style="left:662px;background:#3a3a3f"></div><div class="lg" style="left:679px">Period P&amp;L</div>
<div class="dot" style="left:759px;background:#90e07a"></div><div class="lg" style="left:776px">Trade Vol</div>
<div class="dot" style="left:850px;background:#f4a25c"></div><div class="lg" style="left:867px">Position long</div>
<div class="dot" style="left:959px;background:#8085e9"></div><div class="lg" style="left:976px">Position short</div>
<div class="abs" style="left:1072px;top:810px;width:14px;height:1px;background:#8a7034"></div><div class="lg" style="left:1091px">Asset utilization</div>
<!-- back to top -->
<div class="abs" style="left:1621px;top:746px;width:36px;height:36px;border-radius:50%;background:#fff;box-shadow:0 0 8px rgba(0,0,0,0.08)"></div>
<svg class="abs" style="left:1630px;top:755px" width="18" height="18" viewBox="0 0 18 18"><path d="M2.8 3.6 L15.4 3.6" stroke="#333" stroke-width="1.1"/><path d="M9.1 9 L9.1 14.8" stroke="#444" stroke-width="1.6"/><path d="M6.6 10 L9.1 6.6 L11.6 10 Z" fill="#333"/></svg>
</body></html>
